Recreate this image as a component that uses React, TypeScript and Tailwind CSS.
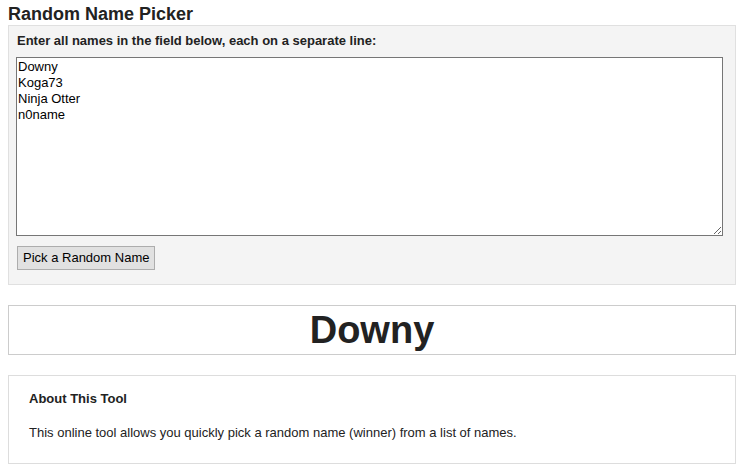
import { useState } from 'react'

const initialNames = 'Downy\nKoga73\nNinja Otter\nn0name'

export default function App() {
  const [names, setNames] = useState(initialNames)
  const [winner, setWinner] = useState('Downy')

  const pickRandom = () => {
    const list = names.split('\n').map(n => n.trim()).filter(Boolean)
    if (list.length === 0) return
    setWinner(list[Math.floor(Math.random() * list.length)])
  }

  return (
    <div className="min-h-screen bg-white px-2 pt-[3px] text-[#222] font-['Liberation_Sans',Arial,sans-serif]">
      <h1 className="text-[18px] leading-[22px] font-bold">Random Name Picker</h1>

      <div className="w-[728px] border border-[#e0e0e0] bg-[#f4f4f4] pl-[7px] pt-[7px] pb-[14px]">
        <label className="block pl-px text-[13px] leading-[16px] font-bold">
          Enter all names in the field below, each on a separate line:
        </label>
        <textarea
          value={names}
          onChange={(e) => setNames(e.target.value)}
          className="mt-2 block h-[179px] w-[707px] border border-[#767676] bg-white px-px pt-px pb-0 text-[13px] leading-[16px] text-black outline-none"
        />
        <button
          type="button"
          onClick={pickRandom}
          className="mt-[10px] ml-px block border border-[#adadad] bg-[#e1e1e1] px-[5px] py-[3px] text-[13px] leading-[16px] text-black hover:bg-[#e5f1fb]"
        >
          Pick a Random Name
        </button>
      </div>

      <div className="mt-5 w-[728px] border border-[#cccccc] text-center text-[38px] leading-[48px] font-bold">
        {winner}
      </div>

      <div className="mt-5 w-[728px] border border-[#dddddd] px-5 pt-[15px] pb-[22px]">
        <h2 className="text-[13px] leading-[16px] font-bold">About This Tool</h2>
        <p className="mt-[18px] text-[13px] leading-[16px]">
          This online tool allows you quickly pick a random name (winner) from a list of names.
        </p>
      </div>
    </div>
  )
}
